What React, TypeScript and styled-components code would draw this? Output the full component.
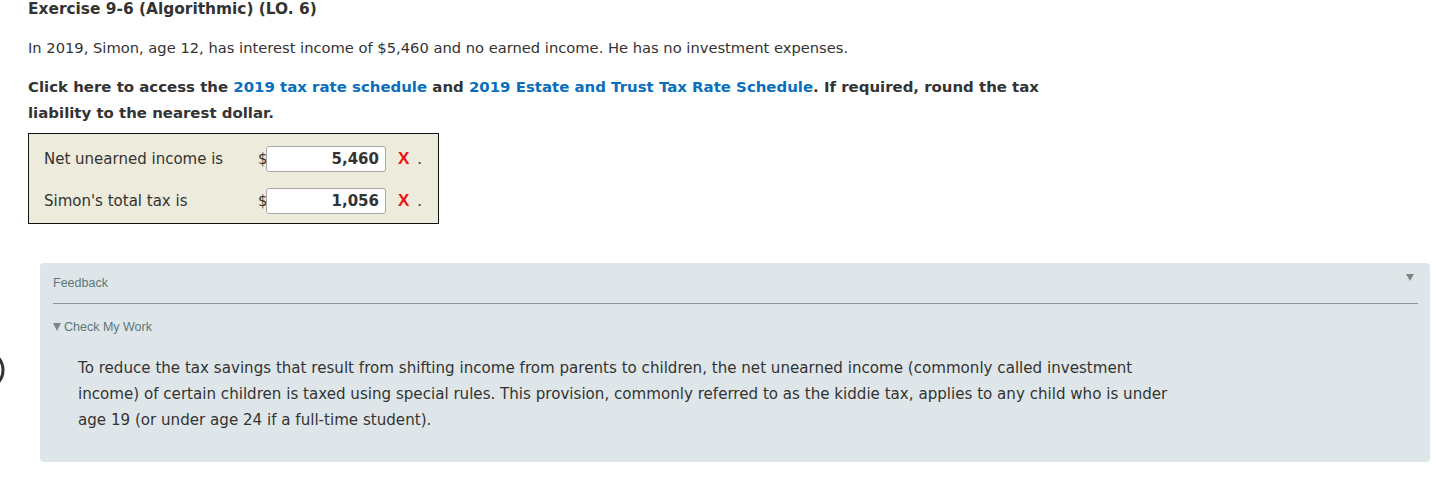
import styled, { createGlobalStyle } from "styled-components"

const GlobalStyle = createGlobalStyle`
  html, body {
    margin: 0;
    padding: 0;
    background: #ffffff;
  }
  body {
    font-family: "DejaVu Sans", Verdana, sans-serif;
    color: #333333;
  }
`

const Page = styled.div`
  position: relative;
  width: 1436px;
  height: 502px;
  overflow: hidden;
  padding: 0 0 0 28px;
  box-sizing: border-box;
`

// part of a round control that sits off the left edge of the window
const EdgeArc = styled.svg`
  position: absolute;
  left: -38px;
  top: 348px;
`

const Title = styled.h3`
  margin: 0;
  font-size: 15.4px;
  font-weight: bold;
  line-height: 18px;
  color: #333333;
`

const Para = styled.p<{ $bold?: boolean; $gap: number }>`
  margin: ${(p) => p.$gap}px 0 0;
  font-size: ${(p) => (p.$bold ? "14.95px" : "14.7px")};
  line-height: 26px;
  font-weight: ${(p) => (p.$bold ? "bold" : "normal")};
  max-width: 1030px;
`

const Link = styled.a`
  color: #0a6ebd;
  text-decoration: none;
`

const AnswerBox = styled.div`
  margin-top: 7px;
  width: 411px;
  box-sizing: border-box;
  border: 1px solid #111111;
  background: #ecebdc;
  padding: 12px 0 9px 15px;
  display: flex;
  flex-direction: column;
  gap: 16px;
`

const Row = styled.div`
  display: flex;
  align-items: center;
  font-size: 15px;
`

const Label = styled.span`
  width: 214px;
`

const Dollar = styled.span`
  width: 8px;
`

const Input = styled.div`
  width: 120px;
  height: 26px;
  box-sizing: border-box;
  border: 1px solid #a9a9a9;
  border-radius: 3px;
  background: #ffffff;
  font-weight: bold;
  font-size: 15px;
  text-align: right;
  line-height: 24px;
  padding-right: 6px;
`

const Wrong = styled.span`
  margin-left: 12px;
  color: #ee1111;
  font-weight: bold;
  font-family: "Liberation Sans", Arial, sans-serif;
  font-size: 17px;
`

const Dot = styled.span`
  margin-left: 8px;
`

const Feedback = styled.section`
  margin: 39px 0 0 12px;
  width: 1390px;
  height: 199px;
  box-sizing: border-box;
  background: #dfe6e9;
  border-radius: 4px;
  padding: 0 12px 0 13px;
`

const FeedbackHead = styled.div`
  display: flex;
  justify-content: space-between;
  align-items: center;
  height: 40px;
  border-bottom: 1px solid #8f9a9c;
  font-family: "Liberation Sans", Arial, sans-serif;
  font-size: 12.5px;
  color: #5b7778;
`

const Triangle = styled.span<{ $size: number }>`
  display: inline-block;
  width: 0;
  height: 0;
  border-left: ${(p) => p.$size / 2}px solid transparent;
  border-right: ${(p) => p.$size / 2}px solid transparent;
  border-top: ${(p) => p.$size - 1}px solid #7f8588;
`

const HeadCaret = styled(Triangle)`
  margin: -12px 4px 0 0;
`

const CheckWork = styled.div`
  margin-top: 16px;
  font-family: "Liberation Sans", Arial, sans-serif;
  font-size: 12.5px;
  color: #5b7778;
  display: flex;
  align-items: center;
  gap: 3px;
`

const Explanation = styled.p`
  margin: 21px 0 0 25px;
  font-size: 15.1px;
  line-height: 26px;
  max-width: 1100px;
  color: #333333;
`

export default function App() {
  return (
    <>
      <GlobalStyle />
      <Page>
        <EdgeArc width="44" height="44" viewBox="0 0 44 44">
          <circle cx="22" cy="22" r="19" fill="none" stroke="#333" strokeWidth="3" />
        </EdgeArc>
        <Title>Exercise 9-6 (Algorithmic) (LO. 6)</Title>
        <Para $gap={17}>
          In 2019, Simon, age 12, has interest income of $5,460 and no earned income. He has no
          investment expenses.
        </Para>
        <Para $bold $gap={13}>
          Click here to access the <Link>2019 tax rate schedule</Link> and{" "}
          <Link>2019 Estate and Trust Tax Rate Schedule</Link>. If required, round the tax
          liability to the nearest dollar.
        </Para>
        <AnswerBox>
          <Row>
            <Label>Net unearned income is</Label>
            <Dollar>$</Dollar>
            <Input>5,460</Input>
            <Wrong>X</Wrong>
            <Dot>.</Dot>
          </Row>
          <Row>
            <Label>Simon's total tax is</Label>
            <Dollar>$</Dollar>
            <Input>1,056</Input>
            <Wrong>X</Wrong>
            <Dot>.</Dot>
          </Row>
        </AnswerBox>
        <Feedback>
          <FeedbackHead>
            <span>Feedback</span>
            <HeadCaret $size={8} />
          </FeedbackHead>
          <CheckWork>
            <Triangle $size={9} />
            <span>Check My Work</span>
          </CheckWork>
          <Explanation>
            To reduce the tax savings that result from shifting income from parents to children,
            the net unearned income (commonly called investment income) of certain children is
            taxed using special rules. This provision, commonly referred to as the kiddie tax,
            applies to any child who is under age 19 (or under age 24 if a full-time student).
          </Explanation>
        </Feedback>
      </Page>
    </>
  )
}
